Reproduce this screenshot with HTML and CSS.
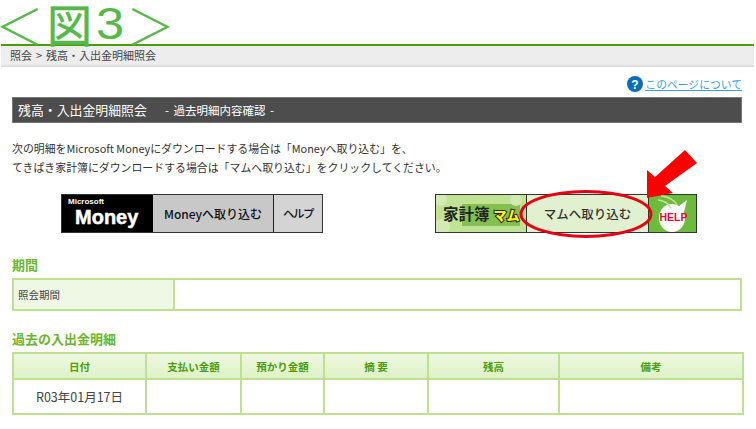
FILE: index.html
```html
<!DOCTYPE html>
<html lang="ja">
<head>
<meta charset="utf-8">
<title>図3</title>
<link rel="stylesheet" href="styles.css">
</head>
<body>
<div class="figure-title"><span class="fig-chev">＜</span><span class="fig-zu">図</span><span class="fig-num">3</span><span class="fig-chev end">＞</span></div>
<div class="crumb">照会 &gt; 残高・入出金明細照会</div>
<main class="content">
  <div class="help-row">
    <svg class="q-icon" width="16" height="16" viewBox="0 0 16 16"><circle cx="8" cy="8" r="8" fill="#0d6cb8"/><text x="8" y="12.5" text-anchor="middle" class="q-mark">?</text></svg>
    <a class="help-link" href="#">このページについて</a>
  </div>
  <h1 class="page-title"><span>残高・入出金明細照会</span><span class="sub">- 過去明細内容確認 -</span></h1>
  <p class="lead">次の明細をMicrosoft Moneyにダウンロードする場合は「Moneyへ取り込む」を、<br>てきぱき家計簿にダウンロードする場合は「マムへ取り込む」をクリックしてください。</p>
  <div class="buttons">
    <div class="btn-group money">
      <div class="m-logo"><span class="m-ms">Microsoft</span><span class="m-name">Money</span></div>
      <div class="m-import">Moneyへ取り込む</div>
      <div class="m-help">ヘルプ</div>
    </div>
    <div class="btn-group mam">
      <div class="k-logo">
        <svg class="k-bg" width="91" height="37" viewBox="0 0 91 37"><rect width="91" height="37" fill="#bfe293"/><rect x="26" y="9" width="58" height="22" fill="#84c04f"/><circle cx="80" cy="5" r="6" fill="#cfe9b0"/><circle cx="6" cy="32" r="8" fill="#d3eab5"/><circle cx="5" cy="5" r="6" fill="#d3eab5"/></svg>
        <span class="k-text">家計簿<span class="k-mam">マム</span></span>
      </div>
      <div class="k-import">マムへ取り込む</div>
      <div class="k-help">
        <svg class="k-help-art" width="48" height="37" viewBox="0 0 48 37"><ellipse cx="23" cy="23" rx="13" ry="14" fill="#fff"/><path d="M29 12l9-7-3 12z" fill="#fff"/><path d="M9 5q9 1 13 8M12 1q12 1 17 10" stroke="#c4e6a4" stroke-width="1.5" fill="none"/></svg>
        <span class="k-help-text">HELP</span>
      </div>
    </div>
  </div>
  <h2 class="sec-title first">期間</h2>
  <table class="period">
    <tr><th>照会期間</th><td></td></tr>
  </table>
  <h2 class="sec-title second">過去の入出金明細</h2>
  <table class="detail">
    <colgroup><col class="c1"><col class="c2"><col class="c3"><col class="c4"><col class="c5"><col class="c6"></colgroup>
    <thead><tr><th>日付</th><th>支払い金額</th><th>預かり金額</th><th>摘 要</th><th>残高</th><th>備考</th></tr></thead>
    <tbody><tr><td>R03年01月17日</td><td></td><td></td><td></td><td></td><td></td></tr></tbody>
  </table>
</main>
<svg class="marks" width="756" height="429" viewBox="0 0 756 429">
  <ellipse cx="586" cy="214" rx="65" ry="22.5" fill="none" stroke="#e60012" stroke-width="3"/>
  <polygon points="647,170 655,177 685,150 697,163 665,186 673,193 647,198" fill="#fa0000"/>
</svg>
</body>
</html>
```
FILE: styles.css
```css
* { box-sizing: border-box; }
html, body { margin: 0; padding: 0; }
body {
  width: 756px;
  height: 429px;
  overflow: hidden;
  background: #fff;
  position: relative;
  font-family: "Noto Sans CJK JP", "Liberation Sans", sans-serif;
  color: #333;
}
.figure-title {
  height: 44px;
  padding-top: 3px;
  display: flex;
  align-items: center;
  color: #55b848;
  white-space: nowrap;
}
.fig-chev {
  font-size: 49px;
  width: 49px;
  line-height: 41px;
  font-weight: 300;
  margin-left: -5px;
}
.fig-chev.end { margin-left: -2px; }
.fig-zu {
  font-size: 45px;
  line-height: 41px;
  margin-left: 3px;
  -webkit-text-stroke: 0.5px #55b848;
}
.fig-num {
  font-family: "Liberation Sans", sans-serif;
  font-size: 44px;
  line-height: 41px;
  width: 36px;
  display: inline-block;
  text-align: center;
  transform: scaleX(1.15);
}
.crumb {
  margin: 0 2px 0 1px;
  height: 23px;
  border-top: 2px solid #4c9c0b;
  border-bottom: 2px solid #ddd;
  background: #ededed;
  padding-left: 9px;
  font-size: 11px;
  line-height: 19px;
  word-spacing: 1.5px;
  color: #444;
}
.content { padding: 0 14px 0 12px; }
.help-row {
  height: 30px;
  display: flex;
  justify-content: flex-end;
  align-items: center;
  gap: 2px;
  padding-top: 4px;
}
.q-mark { font: 700 12px "Liberation Sans", sans-serif; fill: #fff; }
.help-link { font-size: 10.8px; line-height: 14px; color: #3a9fe0; }
.page-title {
  margin: 0;
  height: 26px;
  background: #4d4d4d;
  border: 1px solid #777;
  color: #fff;
  font-size: 12.9px;
  font-weight: 400;
  line-height: 24px;
  padding-left: 5px;
  display: flex;
  gap: 18px;
}
.sub { font-size: 11.5px; word-spacing: 2px; }
.lead {
  margin: 16px 0 0;
  font-size: 10.9px;
  line-height: 19px;
  color: #333;
  white-space: nowrap;
}
.buttons {
  display: flex;
  margin-top: 17px;
  padding-left: 49px;
  gap: 112px;
}
.btn-group {
  width: 262px;
  height: 39px;
  display: flex;
  border: 1px solid #333;
}
.m-logo {
  width: 91px;
  background: #000;
  color: #fff;
  display: flex;
  flex-direction: column;
  padding: 2px 0 0 6px;
  font-family: "Liberation Sans", sans-serif;
}
.m-ms { font-size: 8px; line-height: 9px; font-weight: 700; }
.m-name {
  font-size: 20px;
  line-height: 22px;
  font-weight: 700;
  padding-left: 7px;
  -webkit-text-stroke: 0.5px #fff;
}
.m-import {
  width: 121px;
  background: #c8c8c8;
  color: #111;
  font-size: 12px;
  font-weight: 500;
  line-height: 37px;
  text-align: center;
  border-right: 1px solid #222;
  white-space: nowrap;
}
.m-help {
  flex: 1;
  background: #d4d4d4;
  color: #111;
  font-size: 11.5px;
  font-weight: 500;
  line-height: 37px;
  text-align: center;
  letter-spacing: -1.5px;
}
.k-logo { width: 91px; position: relative; border-right: 1px solid #333; overflow: hidden; }
.k-bg { position: absolute; left: 0; top: 0; }
.k-text {
  position: relative;
  display: block;
  padding-left: 7px;
  font-size: 15.5px;
  font-weight: 700;
  line-height: 37px;
  color: #222;
  white-space: nowrap;
}
.k-mam {
  margin-left: 4px;
  color: #fff200;
  font-size: 13px;
  font-weight: 900;
  -webkit-text-stroke: 2px #222;
  paint-order: stroke fill;
}
.k-import {
  width: 121px;
  background: #e1f1cf;
  color: #333;
  font-size: 12.5px;
  font-weight: 500;
  line-height: 37px;
  text-align: center;
  white-space: nowrap;
}
.k-help {
  flex: 1;
  background: #6cbb3c;
  position: relative;
  border-left: 1px solid #333;
  overflow: hidden;
}
.k-help-art { position: absolute; left: 0; top: 0; }
.k-help-text {
  position: relative;
  display: block;
  text-align: center;
  padding-left: 2px;
  font: 700 10.5px/44px "Liberation Sans", sans-serif;
  color: #e60033;
}
.sec-title {
  margin: 0;
  font-size: 13px;
  font-weight: 700;
  line-height: 16px;
  color: #6cb52d;
}
.sec-title.first { margin-top: 24px; }
.sec-title.second { margin-top: 20px; }
table { border-collapse: collapse; width: 730px; table-layout: fixed; }
.period { margin-top: 5px; height: 33px; }
.period th, .period td { border: 2px solid #bfe08f; }
.period th {
  width: 161px;
  background: #eff8e4;
  font-size: 10.5px;
  font-weight: 400;
  text-align: left;
  padding: 0 0 0 4px;
  color: #444;
}
.detail { margin-top: 5px; }
.detail th, .detail td { border: 2px solid #bfe08f; padding: 0; text-align: center; }
.detail th {
  height: 26px;
  background: linear-gradient(#eef8e2, #def2c6);
  color: #4c9c0b;
  font-size: 10.5px;
  font-weight: 700;
}
.detail td { height: 35px; font-size: 12.5px; color: #444; }
.c1 { width: 133px; }
.c2 { width: 95px; }
.c3 { width: 83px; }
.c4 { width: 104px; }
.c5 { width: 131px; }
.c6 { width: 184px; }
.marks { position: absolute; left: 0; top: 0; pointer-events: none; }
```
